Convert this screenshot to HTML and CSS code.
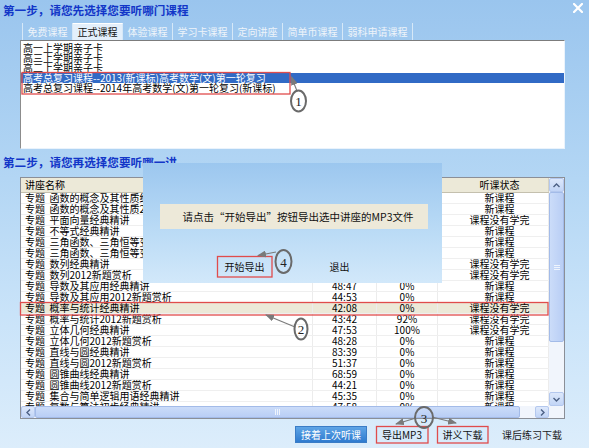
FILE: index.html
```html
<!DOCTYPE html>
<html lang="zh-CN">
<head>
<meta charset="utf-8">
<title>选择课程</title>
<link rel="stylesheet" href="styles.css">
</head>
<body>
<div class="win">
  <div class="titlebar">
    <h1 class="step">第一步，请您先选择您要听哪门课程</h1>
    <svg class="close" width="10" height="10" viewBox="0 0 10 10"><path d="M1 1 L9 9 M9 1 L1 9" stroke="#fff" stroke-width="2.2" stroke-linecap="square"/></svg>
  </div>

  <div class="tabs">
    <div class="tab">免费课程</div>
    <div class="tab active">正式课程</div>
    <div class="tab">体验课程</div>
    <div class="tab">学习卡课程</div>
    <div class="tab">定向讲座</div>
    <div class="tab">简单币课程</div>
    <div class="tab">弱科申请课程</div>
  </div>

  <div class="listbox">
    <div class="li">高一上学期亲子卡</div>
    <div class="li">高三上学期亲子卡</div>
    <div class="li">高二上学期亲子卡</div>
    <div class="li sel">高考总复习课程--2013(新课标)高考数学(文)第一轮复习</div>
    <div class="li">高考总复习课程--2014年高考数学(文)第一轮复习(新课标)</div>
  </div>

  <h2 class="step step2">第二步，请您再选择您要听哪一讲</h2>

  <div class="grid">
    <div class="gbody">
      <div class="hdr">
        <div class="hc">讲座名称</div>
        <div class="hc"></div>
        <div class="hc"></div>
        <div class="hc status">听课状态</div>
      </div>
      <div class="r"><div class="c">专题&nbsp;&nbsp;函数的概念及其性质经典精讲</div><div class="c n">45:12</div><div class="c n">0%</div><div class="c status">新课程</div></div>
      <div class="r"><div class="c">专题&nbsp;&nbsp;函数的概念及其性质2012新题赏析</div><div class="c n">47:30</div><div class="c n">0%</div><div class="c status">新课程</div></div>
      <div class="r"><div class="c">专题&nbsp;&nbsp;平面向量经典精讲</div><div class="c n">46:18</div><div class="c n">35%</div><div class="c status">课程没有学完</div></div>
      <div class="r"><div class="c">专题&nbsp;&nbsp;不等式经典精讲</div><div class="c n">44:06</div><div class="c n">0%</div><div class="c status">新课程</div></div>
      <div class="r"><div class="c">专题&nbsp;&nbsp;三角函数、三角恒等变换经典精讲</div><div class="c n">49:21</div><div class="c n">0%</div><div class="c status">新课程</div></div>
      <div class="r"><div class="c">专题&nbsp;&nbsp;三角函数、三角恒等变换2012新题赏析</div><div class="c n">43:55</div><div class="c n">0%</div><div class="c status">新课程</div></div>
      <div class="r"><div class="c">专题&nbsp;&nbsp;数列经典精讲</div><div class="c n">48:02</div><div class="c n">64%</div><div class="c status">课程没有学完</div></div>
      <div class="r"><div class="c">专题&nbsp;&nbsp;数列2012新题赏析</div><div class="c n">45:40</div><div class="c n">20%</div><div class="c status">课程没有学完</div></div>
      <div class="r"><div class="c">专题&nbsp;&nbsp;导数及其应用经典精讲</div><div class="c n">48:47</div><div class="c n">0%</div><div class="c status">新课程</div></div>
      <div class="r"><div class="c">专题&nbsp;&nbsp;导数及其应用2012新题赏析</div><div class="c n">44:53</div><div class="c n">0%</div><div class="c status">新课程</div></div>
      <div class="r hl"><div class="c">专题&nbsp;&nbsp;概率与统计经典精讲</div><div class="c n">42:08</div><div class="c n">0%</div><div class="c status">课程没有学完</div></div>
      <div class="r"><div class="c">专题&nbsp;&nbsp;概率与统计2012新题赏析</div><div class="c n">43:42</div><div class="c n">92%</div><div class="c status">课程没有学完</div></div>
      <div class="r"><div class="c">专题&nbsp;&nbsp;立体几何经典精讲</div><div class="c n">47:53</div><div class="c n">100%</div><div class="c status">课程没有学完</div></div>
      <div class="r"><div class="c">专题&nbsp;&nbsp;立体几何2012新题赏析</div><div class="c n">48:28</div><div class="c n">0%</div><div class="c status">新课程</div></div>
      <div class="r"><div class="c">专题&nbsp;&nbsp;直线与圆经典精讲</div><div class="c n">83:39</div><div class="c n">0%</div><div class="c status">新课程</div></div>
      <div class="r"><div class="c">专题&nbsp;&nbsp;直线与圆2012新题赏析</div><div class="c n">51:37</div><div class="c n">0%</div><div class="c status">新课程</div></div>
      <div class="r"><div class="c">专题&nbsp;&nbsp;圆锥曲线经典精讲</div><div class="c n">68:59</div><div class="c n">0%</div><div class="c status">新课程</div></div>
      <div class="r"><div class="c">专题&nbsp;&nbsp;圆锥曲线2012新题赏析</div><div class="c n">44:21</div><div class="c n">0%</div><div class="c status">新课程</div></div>
      <div class="r"><div class="c">专题&nbsp;&nbsp;集合与简单逻辑用语经典精讲</div><div class="c n">45:35</div><div class="c n">0%</div><div class="c status">新课程</div></div>
      <div class="r"><div class="c">专题&nbsp;&nbsp;复数与算法初步经典精讲</div><div class="c n">47:58</div><div class="c n">0%</div><div class="c status">新课程</div></div>
    </div>

    <div class="vs">
      <div class="sbtn"><svg width="7" height="5" viewBox="0 0 7 5"><path d="M0.5 4 L3.5 1 L6.5 4" fill="none" stroke="#4d6185" stroke-width="1.4"/></svg></div>
      <div class="vthumb"><span class="grip-h"></span></div>
      <div class="vtrack"></div>
      <div class="sbtn"><svg width="7" height="5" viewBox="0 0 7 5"><path d="M0.5 1 L3.5 4 L6.5 1" fill="none" stroke="#4d6185" stroke-width="1.4"/></svg></div>
    </div>

    <div class="hs">
      <div class="sbtn hbtn"><svg width="5" height="7" viewBox="0 0 5 7"><path d="M4 0.5 L1 3.5 L4 6.5" fill="none" stroke="#4d6185" stroke-width="1.4"/></svg></div>
      <div class="hthumb"><span class="grip-v"></span></div>
      <div class="htrack"></div>
      <div class="sbtn hbtn"><svg width="5" height="7" viewBox="0 0 5 7"><path d="M1 0.5 L4 3.5 L1 6.5" fill="none" stroke="#4d6185" stroke-width="1.4"/></svg></div>
    </div>
    <div class="corner"></div>
  </div>

  <div class="footer">
    <div class="btn primary">接着上次听课</div>
    <div class="btn b2">导出MP3</div>
    <div class="btn b3">讲义下载</div>
    <div class="flat">课后练习下载</div>
  </div>

  <div class="dialog">
    <div class="msg">请点击“开始导出”按钮导出选中讲座的MP3文件</div>
    <div class="dlg-btns">
      <div class="dbtn">开始导出</div>
      <div class="dbtn">退出</div>
    </div>
  </div>

  <svg class="annot" width="589" height="448" viewBox="0 0 589 448">
    <defs>
      <marker id="ah" markerUnits="userSpaceOnUse" markerWidth="9" markerHeight="7" refX="8" refY="3.5" orient="auto">
        <path d="M0 0 L9 3.5 L0 7 Z" fill="#7a7a7a"/>
      </marker>
    </defs>
    <g fill="none" stroke="#e04c4c" stroke-width="1.3">
      <rect x="22" y="72.5" width="268" height="21.5"/>
      <rect x="20.5" y="302.5" width="527.5" height="12.5"/>
      <rect x="217.5" y="256.5" width="54.5" height="20.5"/>
      <rect x="376.5" y="426.5" width="51.5" height="16.5"/>
      <rect x="437.5" y="426.5" width="50.5" height="16.5"/>
    </g>
    <g stroke="#7a7a7a" stroke-width="1.1" fill="none">
      <line x1="297" y1="91" x2="291.5" y2="77" marker-end="url(#ah)"/>
      <line x1="295" y1="327" x2="266" y2="315" marker-end="url(#ah)"/>
      <line x1="276" y1="252" x2="258" y2="255.5" marker-end="url(#ah)"/>
      <line x1="416" y1="418" x2="396" y2="424" marker-end="url(#ah)"/>
      <line x1="432" y1="417" x2="456" y2="423" marker-end="url(#ah)"/>
    </g>
    <g fill="none" stroke="#6a6a6a" stroke-width="2">
      <ellipse cx="298.5" cy="101" rx="7.5" ry="10.5"/>
      <ellipse cx="301" cy="329" rx="6.5" ry="10.5"/>
      <ellipse cx="424" cy="417.5" rx="9" ry="10.5"/>
      <ellipse cx="283.5" cy="261.5" rx="8" ry="11.5"/>
    </g>
    <g class="num" text-anchor="middle">
      <text x="298.5" y="106">1</text>
      <text x="301" y="334">2</text>
      <text x="424" y="422.5">3</text>
      <text x="283.5" y="266.5">4</text>
    </g>
  </svg>
</div>
</body>
</html>
```

FILE: styles.css
```css
* {
  box-sizing: border-box;
  margin: 0;
  padding: 0;
}

html,
body {
  width: 589px;
  height: 448px;
  overflow: hidden;
}

body {
  font-family: "Noto Sans CJK SC", "Noto Sans", sans-serif;
  font-size: 10px;
  color: #000;
  background: linear-gradient(#9ac5ee 0%, #b3d6f4 40%, #c9e3f9 70%, #dcedfb 100%);
}

.win {
  position: relative;
  width: 589px;
  height: 448px;
}

/* ---------- title ---------- */
.titlebar {
  display: flex;
  justify-content: space-between;
  align-items: flex-start;
  height: 23px;
  padding: 4px 6px 0 3px;
}

.step {
  font-size: 11.6px;
  line-height: 13px;
  font-weight: bold;
  color: #1236c8;
  white-space: nowrap;
}

.close {
  display: block;
  margin-top: -1px;
}

/* ---------- tabs ---------- */
.tabs {
  display: flex;
  height: 17px;
  margin-left: 22px;
  border-left: 1px solid #d6e8f7;
}

.tab {
  height: 17px;
  line-height: 17px;
  padding: 0 4.5px;
  color: #eef4fa;
  border-right: 1px solid #d6e8f7;
  white-space: nowrap;
}

.tab.active {
  background: #e3effb;
  color: #111;
  border-top: 1px solid #fff;
  line-height: 16px;
}

/* ---------- course list ---------- */
.listbox {
  margin-left: 20px;
  width: 545px;
  height: 109px;
  background: #fff;
  border: 1px solid;
  border-color: #7c7c7c #eaf3fc #eaf3fc #8c8c8c;
  padding-top: 2px;
}

.li {
  height: 10px;
  line-height: 10px;
  padding-left: 2px;
  white-space: nowrap;
}

.li.sel {
  background: #316ac5;
  color: #fff;
}

.step2 {
  margin-top: 6px;
  padding-left: 3px;
  line-height: 14px;
}

/* ---------- lecture grid ---------- */
.grid {
  margin: 8px 0 0 20px;
  width: 545px;
  height: 242px;
  border: 1px solid #8b8f97;
  display: grid;
  grid-template-columns: 528px 15px;
  grid-template-rows: 228px 12px;
  background: #fff;
}

.gbody {
  overflow: hidden;
}

.hdr,
.r {
  display: grid;
  grid-template-columns: 292px 64px 61px 111px;
}

.hdr {
  height: 15px;
  background: #ece9d8;
  border-bottom: 1px solid #c4c0ae;
}

.hc {
  line-height: 14px;
  padding-left: 4px;
  border-right: 1px solid #d5d2c3;
  white-space: nowrap;
}

.r {
  height: 11px;
  border-bottom: 1px solid #efefef;
}

.r.hl {
  background: #ece9d8;
}

.c {
  line-height: 10px;
  padding-left: 4px;
  white-space: nowrap;
  overflow: hidden;
  border-right: 1px solid #ececec;
}

.c.n {
  padding-left: 0;
  text-align: center;
}

.status {
  text-align: center;
  padding-left: 13px;
}

/* scrollbars */
.vs {
  display: flex;
  flex-direction: column;
  background: #f1f5fc;
}

.sbtn {
  height: 14px;
  flex: none;
  display: flex;
  align-items: center;
  justify-content: center;
  background: linear-gradient(#dde8fb, #c2d5f6);
  border: 1px solid #b4c8ee;
  border-radius: 2px;
}

.vthumb {
  height: 150px;
  flex: none;
  display: flex;
  align-items: center;
  justify-content: center;
  background: linear-gradient(90deg, #cbdcf9, #b9cef5);
  border: 1px solid #a3bbe8;
  border-radius: 2px;
}

.grip-h {
  width: 6px;
  height: 5px;
  border-top: 1px solid #eef4fd;
  border-bottom: 1px solid #eef4fd;
  background: linear-gradient(transparent 1px, #eef4fd 1px, #eef4fd 2px, transparent 2px);
}

.vtrack {
  flex: 1;
}

.hs {
  display: flex;
  background: #f1f5fc;
}

.hbtn {
  width: 14px;
  height: 12px;
}

.hthumb {
  width: 485px;
  display: flex;
  align-items: center;
  justify-content: center;
  background: linear-gradient(#cbdcf9, #b9cef5);
  border: 1px solid #a3bbe8;
  border-radius: 2px;
}

.grip-v {
  width: 5px;
  height: 6px;
  border-left: 1px solid #eef4fd;
  border-right: 1px solid #eef4fd;
  background: linear-gradient(90deg, transparent 1px, #eef4fd 1px, #eef4fd 2px, transparent 2px);
}

.htrack {
  flex: 1;
}

.corner {
  background: #f1f5fc;
}

/* ---------- footer ---------- */
.footer {
  display: flex;
  align-items: center;
  height: 17px;
  margin: 7px 0 0 295px;
}

.btn {
  height: 17px;
  line-height: 17px;
  text-align: center;
  white-space: nowrap;
  color: #111;
}

.btn.primary {
  width: 72px;
  margin-right: 9px;
  color: #fff;
  background: linear-gradient(#5ea4e6, #2f7bcf);
  border: 1px solid #3a7cc6;
  line-height: 15px;
}

.btn.b2 {
  width: 52px;
  margin-right: 9px;
  background: #d8ebfb;
}

.btn.b3 {
  width: 51px;
  margin-right: 14px;
  background: #d8ebfb;
}

.flat {
  color: #1a1a1a;
  white-space: nowrap;
}

/* ---------- overlay dialog ---------- */
.dialog {
  position: absolute;
  left: 143px;
  top: 163px;
  width: 299px;
  height: 120px;
  padding-top: 41px;
  background: linear-gradient(#9cc7ef, #bcdcf6 60%, #d2e8fa);
}

.msg {
  margin-left: 17px;
  width: 268px;
  height: 25px;
  line-height: 25px;
  padding-left: 8px;
  font-size: 10.5px;
  text-align: center;
  white-space: nowrap;
  background: #ede9d9;
  color: #111;
}

.dlg-btns {
  display: flex;
  gap: 40px;
  margin: 27px 0 0 74px;
}

.dbtn {
  width: 55px;
  height: 21px;
  line-height: 21px;
  text-align: center;
  color: #111;
}

/* ---------- annotations ---------- */
.annot {
  position: absolute;
  left: 0;
  top: 0;
  pointer-events: none;
  overflow: visible;
}

.num text {
  font-family: "Liberation Serif", serif;
  font-size: 13px;
  fill: #222;
}
```
